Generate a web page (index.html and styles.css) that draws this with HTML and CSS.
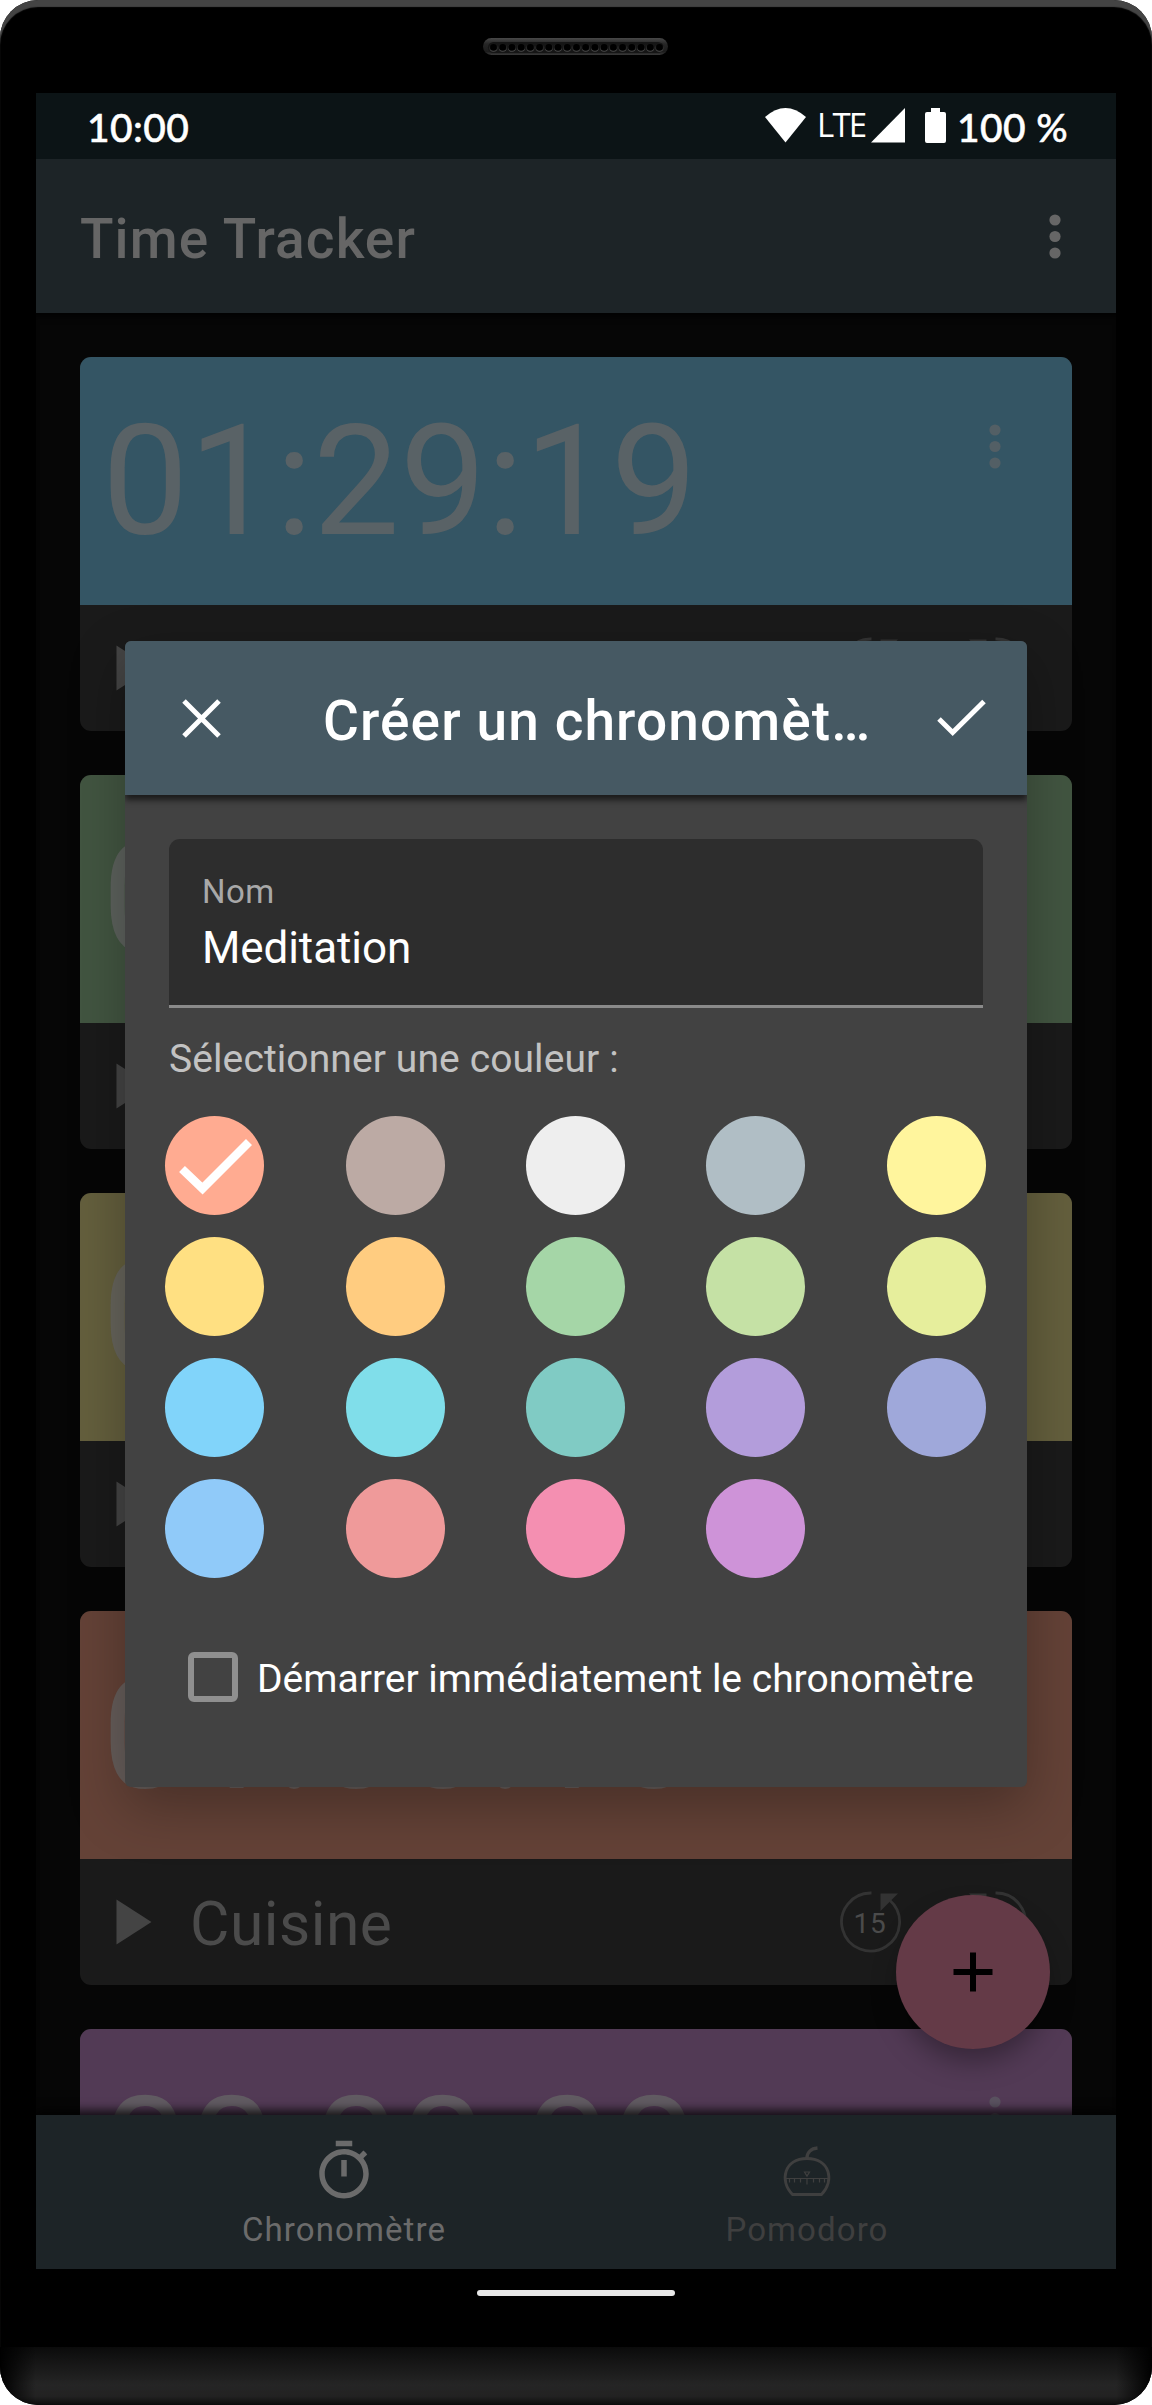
FILE: index.html
```html
<!DOCTYPE html>
<html lang="fr">
<head>
<meta charset="utf-8">
<title>Time Tracker</title>
<link rel="stylesheet" href="styles.css">
</head>
<body>
<svg width="0" height="0" class="defs">
  <symbol id="dots" viewBox="0 0 12 45"><circle cx="6" cy="6" r="5.6"/><circle cx="6" cy="22.5" r="5.6"/><circle cx="6" cy="39" r="5.6"/></symbol>
  <symbol id="play" viewBox="0 0 36 46"><path d="M0.5 .5 35.5 23 .5 45.5z"/></symbol>
  <symbol id="jump" viewBox="0 0 62 62"><path d="M32.500 2A29 29 0 1 0 50.500 9" fill="none" stroke="currentColor" stroke-width="2.800"/><path d="M41.500 2.500H59L41.500 20z"/></symbol>
</svg>
<div class="phone">
  <div class="speaker"><svg width="185" height="17" viewBox="0 0 185 17"><defs><linearGradient id="rim" x2="0" y2="1"><stop offset="0" stop-color="#484848"/><stop offset=".35" stop-color="#262626"/><stop offset=".8" stop-color="#1c1c1c"/><stop offset="1" stop-color="#3a3a3a"/></linearGradient></defs><rect width="185" height="17" rx="8.500" fill="url(#rim)"/><rect x="5" y="4" width="175" height="11" rx="5.500" fill="#161616"/><g fill="none" stroke-linecap="round" stroke-dasharray="0 9.220"><path d="M10.500 9.800H177" stroke="#4a4a4a" stroke-width="8"/><path d="M10.500 8.800H177" stroke="#161616" stroke-width="8"/><path d="M10.500 9.300H177" stroke="#000" stroke-width="6.600"/></g></svg></div>
  <div class="screen">
    <div class="status">
      <span class="clock">10:00</span>
      <svg class="wifi" width="41" height="35" viewBox="0 0 41 35"><path d="M0 9Q20.500-9 41 9L20.500 34.500z"/></svg>
      <span class="lte">LTE</span>
      <svg class="signal" width="34" height="35" viewBox="0 0 34 35"><path d="M34 0V34.500H0z"/></svg>
      <svg class="battery" width="21" height="35" viewBox="0 0 21 35"><path d="M6 0h9v4h4a2 2 0 0 1 2 2v27a2 2 0 0 1-2 2H2a2 2 0 0 1-2-2V6a2 2 0 0 1 2-2h4z"/></svg>
      <span class="percent">100 %</span>
    </div>
    <header class="appbar"><h1>Time Tracker</h1><svg class="dots" width="12" height="45"><use href="#dots"/></svg></header>
    <main class="list">
      <article class="card blue"><div class="time"><span>01:29:19</span><svg class="dots" width="12" height="45"><use href="#dots"/></svg></div><div class="row"><svg class="play" width="36" height="46"><use href="#play"/></svg><span class="name"></span><div class="jump"><svg width="62" height="62"><use href="#jump"/></svg></div><div class="jump flip"><svg width="62" height="62"><use href="#jump"/></svg></div></div></article>
      <article class="card green"><div class="time"><span>0</span></div><div class="row"><svg class="play" width="36" height="46"><use href="#play"/></svg><span class="name"></span><div class="jump flip"><svg width="62" height="62"><use href="#jump"/></svg></div></div></article>
      <article class="card olive"><div class="time"><span>0</span></div><div class="row"><svg class="play" width="36" height="46"><use href="#play"/></svg><span class="name"></span><div class="jump flip"><svg width="62" height="62"><use href="#jump"/></svg></div></div></article>
      <article class="card brown"><div class="time"><span>01:00:10</span></div><div class="row"><svg class="play" width="36" height="46"><use href="#play"/></svg><span class="name">Cuisine</span><div class="jump"><svg width="62" height="62"><use href="#jump"/></svg><b>15</b></div><div class="jump flip"><svg width="62" height="62"><use href="#jump"/></svg></div></div></article>
      <article class="card purple"><div class="time"><span>00:00:00</span><svg class="dots" width="12" height="45"><use href="#dots"/></svg></div></article>
      <div class="fab"><svg width="40" height="40" viewBox="0 0 40 40"><path d="M17 .5h6V17h16.500v6H23v16.500h-6V23H.5v-6H17z"/></svg></div>
    </main>
    <nav class="tabs">
      <div class="tab active"><svg width="66" height="66" viewBox="0 0 24 24"><path d="M15 1H9v2h6V1zm-4 13h2V8h-2v6zm8.030-6.610l1.420-1.420c-.43-.51-.9-.99-1.410-1.410l-1.420 1.420C16.070 4.740 14.120 4 12 4c-4.970 0-9 4.030-9 9s4.020 9 9 9 9-4.030 9-9c0-2.120-.74-4.070-1.970-5.610zM12 20c-3.870 0-7-3.130-7-7s3.130-7 7-7 7 3.130 7 7-3.130 7-7 7z"/></svg><span>Chronomètre</span></div>
      <div class="tab"><svg class="outline" width="66" height="66" viewBox="0 0 66 66"><path d="M18.500 56.500C5 43 10 20.500 33 20.500S61 43 47.500 56.500z" stroke-width="2.800"/><path d="M33 20C33 14.500 37 10.500 43.500 10" stroke-width="3.400"/><path d="M11 40.500h44M15.500 41v3.500M20.500 41v3.500M26.500 41v3.500M33 41v5.500M39.500 41v3.500M45.500 41v3.500M50.500 41v3.500M30.500 34h5L33 38z" stroke-width="1.200"/></svg><span>Pomodoro</span></div>
    </nav>
    <div class="home"></div>
    <section class="dialog">
      <div class="bar"><svg width="39" height="39" viewBox="0 0 39 39"><path d="M2 2 37 37M37 2 2 37" fill="none" stroke="#fff" stroke-width="5"/></svg><h2>Créer un chronomèt…</h2><svg width="49" height="38" viewBox="0 0 49 38"><path d="M2 20 15.700 33.500 47 2.500" fill="none" stroke="#fff" stroke-width="5"/></svg></div>
      <div class="body">
        <div class="field"><label>Nom</label><div class="value">Meditation</div></div>
        <p class="hint">Sélectionner une couleur :</p>
        <div class="swatches">
          <i class="c1"><svg width="99" height="99" viewBox="0 0 99 99"><path d="M17 53 37.500 72.500 84 26" fill="none" stroke="#fff" stroke-width="8.500"/></svg></i><i class="c2"></i><i class="c3"></i><i class="c4"></i><i class="c5"></i>
          <i class="c6"></i><i class="c7"></i><i class="c8"></i><i class="c9"></i><i class="c10"></i>
          <i class="c11"></i><i class="c12"></i><i class="c13"></i><i class="c14"></i><i class="c15"></i>
          <i class="c16"></i><i class="c17"></i><i class="c18"></i><i class="c19"></i>
        </div>
        <div class="check"><span class="box"></span><span class="label">Démarrer immédiatement le chronomètre</span></div>
      </div>
    </section>
  </div>
  <div class="chin"></div>
</div>
</body>
</html>
```
FILE: styles.css
```css
* { box-sizing: border-box; }
body { margin: 0; background: #fff; font-family: Roboto, sans-serif; }
h1, h2, p { margin: 0; }
svg { display: block; fill: currentColor; flex: none; }
.outline { fill: none; stroke: currentColor; }
.defs { position: absolute; }
.phone { width: 1152px; height: 2405px; border-radius: 38px; background: #000; overflow: hidden; display: flex; flex-direction: column; box-shadow: inset 0 7px 1px #444; }
.speaker { height: 93px; padding: 38px 0 0 483px; }
.screen { width: 1080px; height: 2254px; margin-left: 36px; position: relative; display: flex; flex-direction: column; }
.status { height: 66px; background: #0c1416; color: #fff; display: flex; padding: 15px 47px 0 51px; }
.clock, .percent { font: 500 39px/46px Lato, sans-serif; white-space: nowrap; letter-spacing: .4px; margin-top: -4px; -webkit-text-stroke: .5px #fff; }
.clock { width: 678px; }
.lte { font: 400 33px/40px "Open Sans", sans-serif; letter-spacing: -1.800px; margin: -3px 0 0 11px; width: 53px; }
.signal { margin-left: 1px; }
.battery { margin-left: 20px; }
.percent { margin-left: 11px; }
.appbar { height: 154px; background: #1d2427; color: #666; display: flex; justify-content: space-between; padding: 0 55px 0 44px; align-items: center; }
h1, h2 { font-weight: 500; font-size: 55px; line-height: 64px; letter-spacing: 1.100px; }
h1 { padding-top: 6px; }
.list { position: relative; height: 1802px; background: #060606; overflow: hidden; padding: 44px; display: flex; flex-direction: column; gap: 44px; box-shadow: inset 0 8px 8px -6px #000; }
.card { height: 374px; flex: none; border-radius: 11px; background: #1a1a1a; overflow: hidden; }
.time { height: 248px; padding: 35px 71px 0 22px; display: flex; justify-content: space-between; color: rgba(102, 102, 102, .74); font-size: 154px; letter-spacing: .2px; line-height: 180px; }
.time .dots { margin-top: 32px; color: #535f65; }
.purple .dots { color: #5a5260; }
.blue .time { background: #345564; }
.green .time { background: #425541; }
.olive .time { background: #645f3d; }
.brown .time { background: #644237; }
.purple .time { background: #523a55; }
.row { height: 126px; padding: 0 44px 0 36px; display: flex; align-items: center; color: #333; }
.play { color: #444; }
.name { font-size: 60.500px; letter-spacing: .5px; color: #4b4b4b; flex: 1; padding: 5px 0 0 38px; }
.jump { display: grid; width: 62px; height: 62px; margin-left: 65px; }
.jump > * { grid-area: 1 / 1; }
.jump b { font-weight: 400; font-size: 28px; letter-spacing: .8px; text-align: center; line-height: 66px; height: 62px; color: #4b4b4b; }
.flip svg { transform: scaleX(-1); }
.fab { position: absolute; left: 860px; top: 1582px; width: 154px; height: 154px; border-radius: 50%; background: #643a47; color: #000; display: grid; place-items: center; box-shadow: 0 16px 28px -4px rgba(0,0,0,.35); }
.tabs { position: relative; height: 154px; background: #1d2427; display: flex; justify-content: center; padding-right: 1px; color: #3f3f3f; box-shadow: 0 -3px 9px 2px rgba(0,0,0,.75); }
.tab { width: 463px; padding-top: 23px; display: flex; flex-direction: column; align-items: center; font-size: 33px; line-height: 40px; letter-spacing: 1.100px; }
.tab span { margin-top: 6px; }
.tab.active { color: #6b6b6b; }
.home { width: 198px; height: 6px; border-radius: 3px; background: #e8e8e8; margin: 21px auto 0; }
.dialog { position: absolute; left: 89px; top: 548px; width: 902px; height: 1146px; border-radius: 6px; background: #424242; color: #fff; box-shadow: 0 20px 55px rgba(0,0,0,.28); }
.bar { position: relative; height: 154px; border-radius: 6px 6px 0 0; background: #465963; display: flex; align-items: center; padding: 0 41px 0 57px; box-shadow: 0 5px 6px rgba(0,0,0,.6); clip-path: inset(0 0 -20px 0); }
.bar h2 { flex: 1; padding: 6px 0 0 102px; white-space: nowrap; }
.body { padding: 44px 44px 0; }
.field { height: 169px; border-radius: 11px 11px 0 0; background: #2d2d2d; border-bottom: 3px solid #8a8a8a; padding: 33px 33px 0; }
.field label { display: block; font-size: 33px; line-height: 40px; color: #a8a8a8; letter-spacing: .4px; }
.value { font-size: 44px; line-height: 52px; margin-top: 10px; letter-spacing: -.1px; }
.hint { font-size: 39px; line-height: 46px; margin: 28px 0 34px; color: #c2c2c2; letter-spacing: .1px; white-space: nowrap; }
.swatches { display: grid; grid-template-columns: 181px 180px 180px 181px 99px; row-gap: 22px; margin: 0 -4px; }
.swatches i { width: 99px; height: 99px; border-radius: 50%; }
.c1 { background: #ffab91; } .c2 { background: #bcaaa4; } .c3 { background: #eee; } .c4 { background: #b0bec5; } .c5 { background: #fff59d; }
.c6 { background: #ffe082; } .c7 { background: #ffcc80; } .c8 { background: #a5d6a7; } .c9 { background: #c5e1a5; } .c10 { background: #e6ee9c; }
.c11 { background: #81d4fa; } .c12 { background: #80deea; } .c13 { background: #80cbc4; } .c14 { background: #b39ddb; } .c15 { background: #9fa8da; }
.c16 { background: #90caf9; } .c17 { background: #ef9a9a; } .c18 { background: #f48fb1; } .c19 { background: #ce93d8; }
.check { display: flex; align-items: center; margin: 74px 0 0 19px; font-size: 39px; height: 50px; white-space: nowrap; }
.label { padding-top: 3px; }
.box { width: 50px; height: 50px; border: 6px solid #8f8f8f; border-radius: 6px; margin-right: 19px; flex: none; }
.chin { height: 58px; background: linear-gradient(90deg, #000, transparent 36px, transparent 1116px, #000), linear-gradient(#0b0b0b, #252525 65%, #222 85%, #0c0c0c); }
```
